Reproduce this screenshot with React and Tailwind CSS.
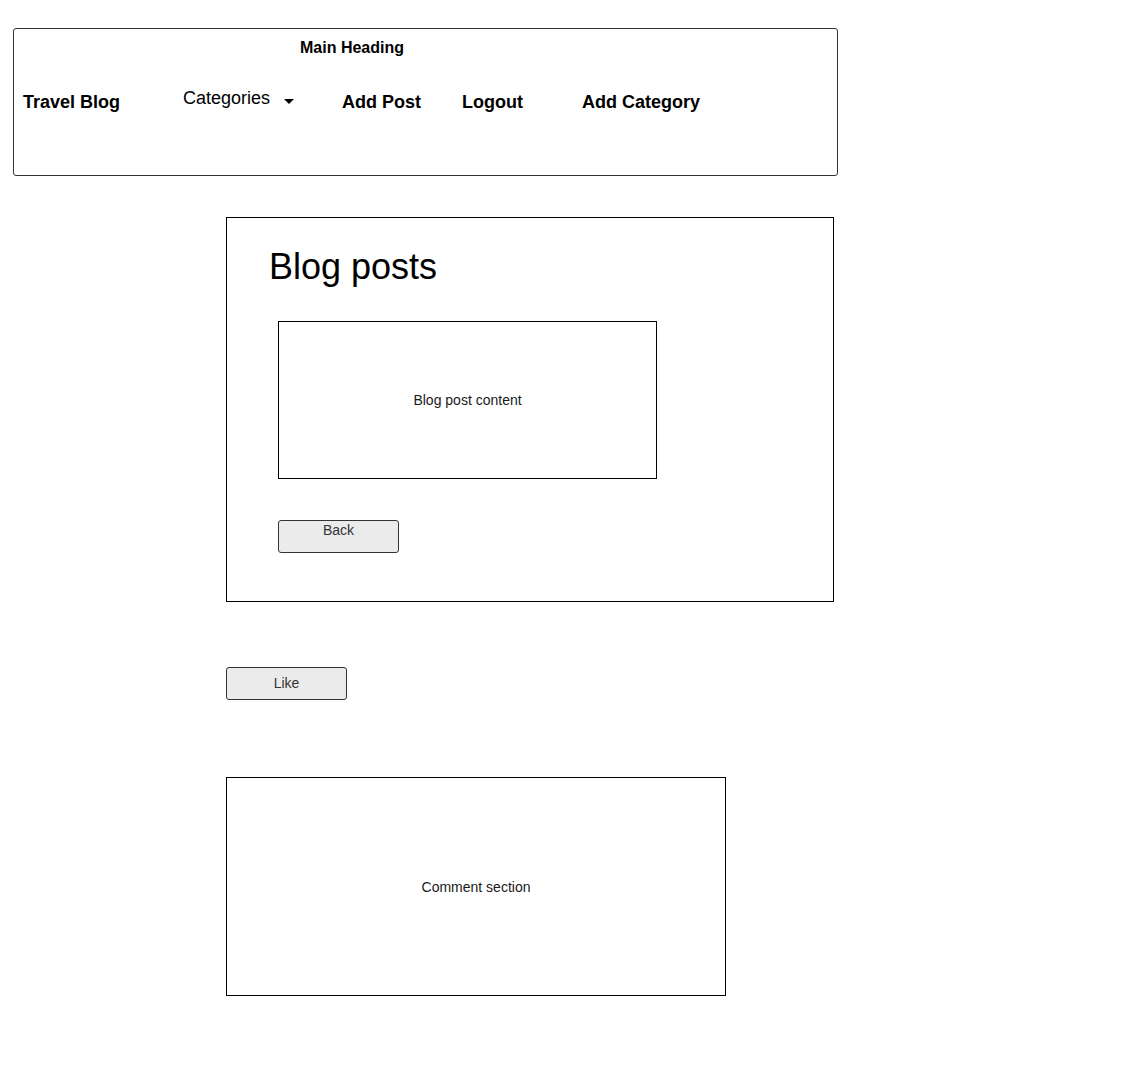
export default function App() {
  return (
    <div className="min-h-[1083px] bg-white pt-[28px] pb-[80px] font-['Liberation_Sans',Arial,sans-serif] text-black">
      <header className="ml-[13px] w-[825px] h-[148px] border border-[#333] rounded-[3px]">
        <div className="mt-[10px] ml-[286px] text-[16px] leading-[18px] font-bold">Main Heading</div>
        <nav className="mt-[35px] pl-[9px] flex items-start text-[18px] leading-[20px]">
          <div className="w-[160px] font-bold">Travel Blog</div>
          <div className="w-[159px] -mt-[4px] flex items-start">
            <span>Categories</span>
            <svg className="ml-[14px] mt-[11px]" width="10" height="5" viewBox="0 0 10 5">
              <path d="M0 0 L10 0 L5 5 Z" fill="#000" />
            </svg>
          </div>
          <div className="w-[120px] font-bold">Add Post</div>
          <div className="w-[120px] font-bold">Logout</div>
          <div className="font-bold">Add Category</div>
        </nav>
      </header>

      <section className="mt-[41px] ml-[226px] w-[608px] h-[385px] border border-black">
        <h1 className="mt-[28px] ml-[42px] text-[36px] leading-[42px] font-normal">Blog posts</h1>
        <div className="mt-[33px] ml-[51px] w-[379px] h-[158px] border border-black flex items-center justify-center text-[14px] text-[#1a1a1a]">
          Blog post content
        </div>
        <button className="mt-[41px] ml-[51px] w-[121px] h-[33px] flex justify-center items-start bg-[#ebebeb] border border-[#333] rounded-[3px] text-[14px] leading-[16px] pt-[1px] text-[#333]">
          Back
        </button>
      </section>

      <button className="mt-[65px] ml-[226px] w-[121px] h-[33px] flex items-center justify-center pb-[2px] bg-[#ebebeb] border border-[#333] rounded-[3px] text-[14px] leading-[16px] text-[#333]">
        Like
      </button>

      <section className="mt-[77px] ml-[226px] w-[500px] h-[219px] border border-black flex items-center justify-center pt-[2px] text-[14px] text-[#1a1a1a]">
        Comment section
      </section>
    </div>
  );
}
